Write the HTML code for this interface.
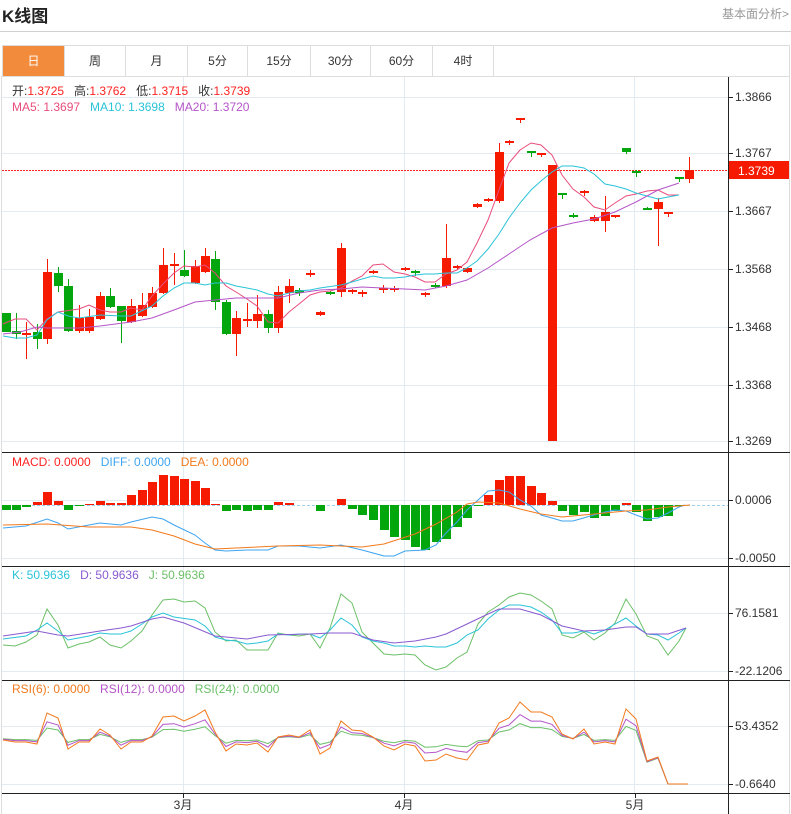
<!DOCTYPE html>
<html><head><meta charset="utf-8">
<style>
body{margin:0;width:791px;height:814px;background:#fff;font-family:"Liberation Sans","Noto Sans CJK SC",sans-serif;position:relative;overflow:hidden}
.t{position:absolute;left:2px;top:2px;font-size:17px;font-weight:bold;color:#222}
.r{position:absolute;right:2px;top:5px;font-size:12px;color:#999}
.hr{position:absolute;left:0;top:31px;width:791px;height:1px;background:#d0d0d0}
.tabs{position:absolute;left:2px;top:45px;height:31px;width:788px;border:1px solid #ddd;border-bottom:none;box-sizing:border-box}
.tab{position:absolute;top:0;height:31px;line-height:30px;text-align:center;font-size:12px;color:#333;border-right:1px solid #ddd;box-sizing:border-box}
.tab.on{background:#f28c3c;color:#fff}
svg{position:absolute;left:0;top:0}
</style></head><body>
<div class="t">K线图</div>
<div class="r">基本面分析&gt;</div>
<div class="hr"></div>
<div class="tabs">
<div class="tab on" style="left:0;width:62px">日</div>
<div class="tab" style="left:62px;width:61px">周</div>
<div class="tab" style="left:123px;width:62px">月</div>
<div class="tab" style="left:185px;width:60px">5分</div>
<div class="tab" style="left:245px;width:63px">15分</div>
<div class="tab" style="left:308px;width:60px">30分</div>
<div class="tab" style="left:368px;width:62px">60分</div>
<div class="tab" style="left:430px;width:61px">4时</div>
</div>
<svg id="s" width="791" height="814" xmlns="http://www.w3.org/2000/svg" font-family="Liberation Sans, Noto Sans CJK SC, sans-serif" font-size="12"></svg>
<script>
var s=document.getElementById('s'),h='';
function L(x1,y1,x2,y2,c,w,d){h+='<line x1="'+x1+'" y1="'+y1+'" x2="'+x2+'" y2="'+y2+'" stroke="'+c+'" stroke-width="'+(w||1)+'"'+(d?' stroke-dasharray="'+d+'"':'')+'/>';}
function T(x,y,t,c,a){h+='<text x="'+x+'" y="'+y+'" fill="'+c+'"'+(a?' text-anchor="'+a+'"':'')+'>'+t+'</text>';}
function P(pts,c){h+='<polyline fill="none" stroke="'+c+'" stroke-width="1" points="'+pts.map(function(p){return p.join(',')}).join(' ')+'"/>';}
var gc='#e2ebf1';
// grid
[97,153,211,269,327,385,441,500,558,613,671,726,784].forEach(function(y){L(2,y+.5,728,y+.5,gc);});
[183,404,634].forEach(function(x){L(x+.5,77,x+.5,793,gc);});
// borders
L(1.5,76,1.5,814,'#ddd');L(789.5,76,789.5,814,'#ddd');L(2,76.5,790,76.5,'#ddd');
[452,566,680,793].forEach(function(y){L(2,y+.5,790,y+.5,'#222');});
L(728.5,77,728.5,814,'#222');
// axis labels
[[97,'1.3866'],[153,'1.3767'],[211,'1.3667'],[269,'1.3568'],[327,'1.3468'],[385,'1.3368'],[441,'1.3269'],[500,'0.0006'],[558,'-0.0050'],[613,'76.1581'],[671,'-22.1206'],[726,'53.4352'],[784,'-0.6640']].forEach(function(a){L(728,a[0]+.5,733,a[0]+.5,'#222');T(735,a[0]+4,a[1],'#333');});
[[183,'3月'],[404,'4月'],[635,'5月']].forEach(function(a){L(a[0]+.5,793,a[0]+.5,798,'#222');T(a[0],809,a[1],'#333','middle');});
// price line
L(2,170.5,728,170.5,'#f22','1','2,1');
h+='<rect x="729" y="161" width="60" height="18" fill="#f51a00"/>';T(738,175,'1.3739','#fff');
// header text
h+='<text x="12" y="95"><tspan fill="#333">开:</tspan><tspan fill="#f22">1.3725</tspan><tspan fill="#333" dx="10">高:</tspan><tspan fill="#f22">1.3762</tspan><tspan fill="#333" dx="10">低:</tspan><tspan fill="#f22">1.3715</tspan><tspan fill="#333" dx="10">收:</tspan><tspan fill="#f22">1.3739</tspan></text>';
h+='<text x="12" y="111"><tspan fill="#e94c7c">MA5: 1.3697</tspan><tspan fill="#2ac3d8" dx="10">MA10: 1.3698</tspan><tspan fill="#b455c8" dx="10">MA20: 1.3720</tspan></text>';
h+='<text x="12" y="466"><tspan fill="#f22">MACD: 0.0000</tspan><tspan fill="#3fa4f0" dx="10">DIFF: 0.0000</tspan><tspan fill="#f27a1c" dx="10">DEA: 0.0000</tspan></text>';
h+='<text x="12" y="579"><tspan fill="#2ac3d8">K: 50.9636</tspan><tspan fill="#8a5ad0" dx="10">D: 50.9636</tspan><tspan fill="#6cc068" dx="10">J: 50.9636</tspan></text>';
h+='<text x="12" y="693"><tspan fill="#f27a1c">RSI(6): 0.0000</tspan><tspan fill="#b455c8" dx="10">RSI(12): 0.0000</tspan><tspan fill="#6cc068" dx="10">RSI(24): 0.0000</tspan></text>';
// candles [x,top,bot,wt,wb,c]
var R='#f51a00',G='#03a60d';
var C=[[6,313,332,313,332,G],[16,331,334,313,339,G],[26,333,335,322,359,R],[37,332,339,324,349,G],[47,272,339,259,344,R],[58,273,286,267,292,G],[68,286,331,279,332,G],[79,318,331,305,333,R],[89,317,331,309,333,R],[100,296,319,292,320,R],[110,296,307,288,308,G],[121,306,321,306,343,G],[131,306,322,299,323,R],[142,305,316,293,317,R],[152,293,307,287,308,R],[163,265,293,248,294,R],[174,264,266,253,285,R],[184,270,276,250,277,G],[195,266,283,260,284,R],[205,256,272,248,273,R],[215,259,302,251,310,G],[226,302,334,300,335,G],[236,318,334,311,356,R],[247,319,321,303,327,R],[257,314,321,295,328,R],[268,314,328,310,333,G],[278,292,328,286,333,R],[289,286,293,279,303,R],[299,290,293,288,296,G],[310,273,275,270,277,R],[320,312,315,311,316,R],[330,292,294,291,295,G],[341,248,292,243,297,R],[352,290,292,289,294,R],[362,292,294,290,297,R],[373,271,273,270,274,R],[383,288,289,285,293,R],[394,288,289,286,292,R],[405,268,270,267,271,R],[415,271,273,270,276,G],[425,293,295,292,297,R],[435,285,286,283,288,G],[446,258,286,224,288,R],[457,266,268,265,270,R],[467,268,272,267,273,R],[477,204,207,203,208,R],[488,199,201,198,202,R],[499,152,201,143,203,R],[509,141,143,140,145,R],[520,118,120,118,123,R],[531,151,153,151,157,G],[541,153,155,153,157,R],[552,165,441,165,441,R],[562,193,195,193,199,G],[573,215,217,213,218,G],[584,191,193,190,196,R],[594,217,221,215,222,R],[605,212,221,196,232,R],[615,215,217,215,218,R],[626,148,152,148,154,G],[636,171,173,170,177,G],[647,208,210,207,210,G],[658,202,209,198,246,R],[668,212,214,212,217,R],[679,177,179,177,182,G],[689,170,179,157,183,R]];
C.forEach(function(c){L(c[0]+.5,c[3],c[0]+.5,c[4],c[5]);var bh=Math.max(2,c[2]-c[1]);h+='<rect x="'+(c[0]-4)+'" y="'+c[1]+'" width="9" height="'+bh+'" fill="'+c[5]+'"/>';});
P([[3,324],[15,319],[26,319],[37,330],[47,319],[58,312],[79,309],[89,305],[100,310],[110,312],[121,312],[131,308],[142,310],[152,296],[163,284],[174,273],[184,266],[195,267],[205,265],[215,273],[226,286],[236,292],[247,299],[257,306],[268,322],[278,323],[289,312],[299,304],[310,295],[320,292],[330,291],[341,288],[352,281],[362,276],[373,265],[383,264],[394,272],[405,274],[415,277],[425,282],[435,282],[446,274],[457,270],[467,262],[477,243],[488,220],[499,190],[509,163],[520,150],[531,143],[541,145],[552,155],[562,175],[573,189],[584,197],[594,207],[605,210],[615,203],[626,196],[636,194],[647,191],[658,190],[668,195],[679,195]],'#e94c7c');
P([[3,336],[15,338],[26,338],[37,335],[47,320],[58,312],[68,316],[79,318],[100,315],[121,316],[131,316],[152,306],[163,296],[174,288],[184,283],[195,283],[205,285],[215,283],[226,283],[236,286],[247,288],[257,290],[268,294],[278,296],[289,293],[299,291],[310,290],[320,288],[341,285],[352,282],[362,279],[373,276],[383,278],[394,278],[405,277],[415,275],[425,274],[435,274],[446,273],[457,273],[467,268],[477,261],[488,249],[499,234],[509,218],[520,203],[531,190],[541,181],[552,172],[562,166],[573,166],[584,168],[594,174],[605,184],[615,186],[626,189],[636,193],[647,196],[658,199],[668,197],[679,195]],'#2ac3d8');
P([[3,334],[20,332],[37,327],[47,328],[79,328],[100,326],[131,322],[152,318],[174,310],[195,302],[215,300],[236,298],[257,298],[278,298],[299,293],[320,290],[341,289],[362,287],[383,288],[405,289],[425,290],[446,286],[467,280],[488,268],[509,254],[530,240],[552,228],[573,223],[594,219],[615,212],[636,202],[658,190],[679,183]],'#b455c8');
// MACD
L(2,505.5,728,505.5,'#9cd0ec','1','3,2');
var M=[[6,510],[16,510],[26,507],[37,502],[47,492],[58,501],[68,510],[79,506],[89,504],[100,501],[110,503],[121,503],[131,495],[142,490],[152,482],[163,475],[174,476],[184,479],[195,481],[205,488],[215,504],[226,511],[236,510],[247,511],[257,510],[268,510],[278,502],[289,503],[320,511],[341,499],[352,509],[362,515],[373,520],[384,530],[394,537],[405,540],[415,547],[425,550],[436,542],[446,539],[457,527],[467,518],[478,505],[488,495],[499,480],[509,476],[520,476],[531,486],[541,493],[552,501],[562,511],[573,515],[584,512],[594,518],[605,516],[615,511],[626,503],[636,512],[647,521],[658,517],[668,516],[679,506]];
M.forEach(function(m){var t=Math.min(m[1],505),b=Math.max(m[1],505);h+='<rect x="'+(m[0]-4)+'" y="'+t+'" width="9" height="'+Math.max(1,b-t)+'" fill="'+(m[1]<505?R:G)+'"/>';});
P([[3,528],[26,526],[47,519],[58,523],[68,529],[89,525],[100,523],[121,525],[131,522],[152,517],[163,519],[174,525],[195,535],[205,543],[215,550],[226,551],[247,550],[268,550],[278,546],[299,546],[320,548],[341,545],[362,550],[384,556],[394,556],[405,551],[425,550],[436,545],[446,533],[457,522],[467,510],[478,500],[488,491],[499,490],[509,492],[520,500],[531,506],[541,515],[552,518],[562,521],[573,521],[594,515],[605,512],[615,510],[626,511],[636,515],[647,519],[658,518],[668,513],[679,507],[685,505]],'#3fa4f0');
P([[3,525],[47,524],[89,527],[131,527],[152,530],[174,536],[195,544],[215,549],[236,548],[278,546],[320,545],[362,547],[384,544],[415,534],[436,524],[457,512],[467,504],[478,502],[499,503],[520,509],[541,514],[562,517],[594,514],[626,511],[647,510],[668,507],[690,505]],'#f27a1c');
// KDJ
P([[3,645],[15,646],[26,642],[37,635],[47,609],[58,625],[68,648],[79,644],[89,642],[100,637],[110,645],[121,648],[131,641],[142,631],[152,615],[163,600],[174,599],[184,602],[195,601],[205,608],[215,632],[226,641],[236,640],[247,650],[257,650],[268,650],[278,633],[289,635],[299,636],[310,634],[320,648],[330,628],[341,594],[352,603],[362,632],[373,643],[384,654],[394,655],[405,654],[415,655],[425,665],[436,670],[446,667],[457,658],[467,652],[478,624],[488,612],[499,605],[509,597],[520,593],[531,595],[541,601],[552,609],[562,635],[573,638],[584,632],[594,640],[605,633],[615,623],[626,599],[636,614],[647,636],[658,640],[668,655],[679,641],[686,628]],'#6cc068');
P([[3,639],[26,636],[37,630],[47,623],[58,631],[68,640],[89,636],[100,633],[110,634],[121,634],[131,631],[142,624],[152,617],[163,613],[174,617],[195,620],[205,626],[215,637],[226,640],[236,641],[247,644],[257,643],[268,641],[278,634],[289,635],[299,634],[310,634],[320,638],[330,630],[341,618],[352,625],[362,637],[373,641],[384,643],[394,646],[405,646],[415,647],[425,646],[436,647],[446,647],[457,643],[467,635],[478,630],[488,619],[499,610],[509,605],[520,605],[531,607],[541,612],[552,620],[562,633],[573,633],[584,631],[594,634],[605,630],[615,624],[626,618],[636,626],[647,634],[658,635],[668,640],[679,633],[686,628]],'#2ac3d8');
P([[3,636],[37,631],[58,635],[68,636],[100,631],[121,628],[131,626],[152,619],[163,617],[184,623],[215,636],[247,639],[268,635],[310,634],[330,633],[352,633],[373,640],[394,643],[415,641],[436,637],[446,634],[467,624],[488,614],[499,609],[520,609],[541,615],[562,626],[584,631],[605,630],[626,627],[636,627],[647,634],[668,634],[686,628]],'#8a5ad0');
// RSI
var r6=[[3,740],[15,742],[26,742],[37,744],[47,713],[58,718],[68,749],[79,742],[89,742],[100,729],[110,735],[121,749],[131,742],[142,742],[152,736],[163,717],[174,716],[184,721],[195,716],[205,710],[215,732],[226,751],[236,744],[247,745],[257,743],[268,752],[278,737],[289,735],[299,737],[310,730],[320,754],[330,748],[341,721],[352,730],[362,731],[373,737],[384,746],[394,750],[405,744],[415,746],[425,761],[436,760],[446,754],[457,758],[467,760],[478,745],[488,743],[499,723],[509,718],[520,702],[531,712],[541,712],[552,717],[562,734],[573,739],[584,729],[594,744],[605,742],[615,744],[626,709],[636,719],[647,761],[658,757],[668,784],[688,784]];
function sc(f){return r6.map(function(p){return [p[0],p[0]>=640?p[1]+(p[1]<784?(1-f)*2:0):Math.round((738+(p[1]-738)*f)*10)/10];});}
P(sc(0.4),'#6cc068');P(sc(0.65),'#b455c8');P(r6,'#f27a1c');
s.innerHTML=h;
</script>
</body></html>
